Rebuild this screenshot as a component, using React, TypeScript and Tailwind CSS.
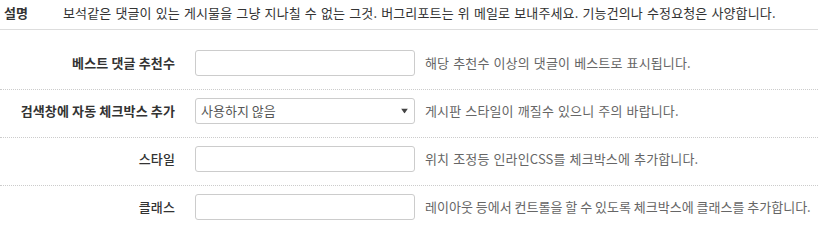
import React from 'react';

const font = { fontFamily: '"Noto Sans CJK KR", "Noto Sans", sans-serif' };

interface RowProps {
  label: string;
  bold?: boolean;
  help: string;
  first?: boolean;
  last?: boolean;
  tight?: boolean;
  children: React.ReactNode;
}

function Row({ label, bold, help, first, last, tight, children }: RowProps) {
  return (
    <div
      className={`flex items-center ${first ? 'pt-[20px]' : 'pt-2'} pb-[13px] ${
        last ? '' : 'border-b border-dotted border-[#cccccc]'
      }`}
    >
      <label
        className={`w-[175px] shrink-0 text-right text-[13px] leading-[18px] tracking-[0.01em] text-[#333333] ${
          bold ? 'font-bold' : 'font-medium'
        }`}
      >
        {label}
      </label>
      <div className="ml-[20px] w-[220px] shrink-0">{children}</div>
      <p
        className={`ml-[10px] text-[13px] leading-[18px] text-[#666666] whitespace-nowrap ${
          tight ? '' : 'tracking-[0.01em] [word-spacing:1px]'
        }`}
      >
        {help}
      </p>
    </div>
  );
}

function TextInput() {
  return (
    <input
      type="text"
      className="block h-[26px] w-full rounded-[3px] border border-[#cccccc] bg-white px-2 text-[13px] outline-none"
    />
  );
}

export default function App() {
  return (
    <div className="w-[818px] h-[237px] overflow-hidden bg-white" style={font}>
      <div className="flex items-center h-[30px] border-b border-[#dddddd] pb-[3px]">
        <span className="w-[63px] shrink-0 pl-[4px] text-[13px] font-bold text-[#333333]">설명</span>
        <span className="text-[13px] tracking-[0.01em] text-[#333333] whitespace-nowrap [word-spacing:1px]">
          보석같은 댓글이 있는 게시물을 그냥 지나칠 수 없는 그것. 버그리포트는 위 메일로 보내주세요. 기능건의나 수정요청은 사양합니다.
        </span>
      </div>

      <Row label="베스트 댓글 추천수" bold first help="해당 추천수 이상의 댓글이 베스트로 표시됩니다.">
        <TextInput />
      </Row>

      <Row label="검색창에 자동 체크박스 추가" bold help="게시판 스타일이 깨질수 있으니 주의 바랍니다.">
        <div className="relative h-[26px] w-full rounded-[3px] border border-[#cccccc] bg-white">
          <span className="absolute left-[5px] top-1/2 -translate-y-1/2 text-[13px] text-[#555555]">
            사용하지 않음
          </span>
          <svg
            className="absolute right-[6px] top-1/2 -translate-y-1/2"
            width="7"
            height="5"
            viewBox="0 0 7 5"
          >
            <path d="M0 0 L7 0 L3.5 5 Z" fill="#444444" />
          </svg>
        </div>
      </Row>

      <Row label="스타일" help="위치 조정등 인라인CSS를 체크박스에 추가합니다.">
        <TextInput />
      </Row>

      <Row label="클래스" last tight help="레이아웃 등에서 컨트롤을 할 수 있도록 체크박스에 클래스를 추가합니다.">
        <TextInput />
      </Row>
    </div>
  );
}
